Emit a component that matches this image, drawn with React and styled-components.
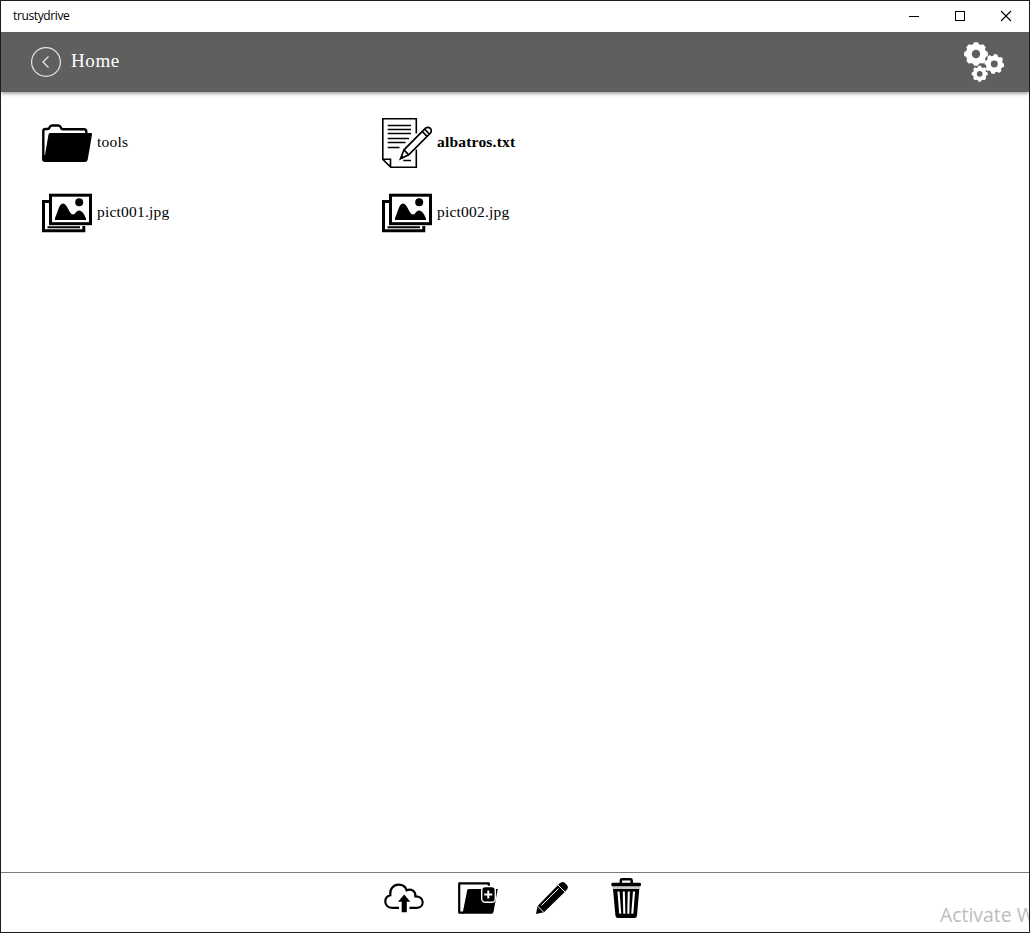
import React from "react";
import styled, { createGlobalStyle } from "styled-components";

const GlobalStyle = createGlobalStyle`
  * { box-sizing: border-box; }
  html, body { margin: 0; padding: 0; overflow: hidden; }
`;

const Window = styled.div`
  position: relative;
  display: flex;
  flex-direction: column;
  width: 1030px;
  height: 933px;
  border: 1px solid #1f1c20;
  background: #fff;
  color: #000;
  overflow: hidden;
  font-family: "Liberation Serif", "Times New Roman", serif;
`;

const TitleBar = styled.div`
  position: relative;
  z-index: 1;
  display: flex;
  justify-content: space-between;
  align-items: center;
  height: 31px;
  flex: none;
  padding-left: 12px;
  background: #fff;
  font: 12px/16px "Open Sans", "Noto Sans", sans-serif;
  letter-spacing: -0.38px;
`;

const AppName = styled.span`
  margin-bottom: 2px;
`;

const WindowButtons = styled.div`
  display: flex;
  margin-right: -10px;
`;

const WindowButton = styled.div`
  width: 46px;
  height: 31px;
  svg { display: block; }
`;

const Header = styled.header`
  display: flex;
  align-items: center;
  height: 60px;
  flex: none;
  padding: 0 25px 0 30px;
  background: #5f5f5f;
  color: #fff;
  box-shadow: 0 1px 4px rgba(0, 0, 0, 0.5);
`;

const HeaderTitle = styled.h1`
  flex: 1;
  margin: 0 0 2px 10px;
  font-size: 19px;
  line-height: 22px;
  letter-spacing: 0.6px;
  font-weight: normal;
`;

const Files = styled.main`
  flex: 1;
  display: grid;
  grid-template-columns: 340px 340px;
  grid-auto-rows: 50px;
  row-gap: 20px;
  padding: 26px 0 0 41px;
`;

const FileItem = styled.div`
  display: flex;
  align-items: center;
  gap: 5px;
  font-size: 15.5px;
  letter-spacing: 0.2px;
  font-weight: ${(p) => (p.$bold ? "bold" : "normal")};
  span { line-height: 18px; margin-bottom: 2px; }
`;

const Toolbar = styled.footer`
  display: flex;
  justify-content: center;
  gap: 34px;
  height: 60px;
  flex: none;
  padding: 5px 0 0;
  border-top: 1px solid #7c7c7c;
`;

const Icon = styled.svg`
  display: block;
  flex: none;
`;

const Watermark = styled.div`
  position: absolute;
  left: 939px;
  top: 900px;
  color: #bdbdbd;
  font: 19.4px/27px "Open Sans", "Noto Sans", sans-serif;
  white-space: nowrap;
`;

function gearPath(cx, cy, outer, inner, hole, teeth, turn = 0) {
  const step = (Math.PI * 2) / teeth;
  const points = [];
  const at = (angle, r) =>
    points.push(`${(cx + Math.cos(angle) * r).toFixed(2)} ${(cy + Math.sin(angle) * r).toFixed(2)}`);
  for (let i = 0; i < teeth; i++) {
    const a = i * step + turn;
    at(a - step * 0.34, inner);
    at(a - step * 0.2, outer);
    at(a + step * 0.2, outer);
    at(a + step * 0.34, inner);
  }
  return `M${points.join("L")}ZM${cx - hole} ${cy}a${hole} ${hole} 0 1 0 ${hole * 2} 0a${hole} ${hole} 0 1 0 ${-hole * 2} 0Z`;
}

const BackIcon = () => (
  <Icon width="30" height="30" viewBox="0 0 30 30" fill="none" stroke="#e6e6e6">
    <circle cx="15" cy="15" r="14.4" strokeWidth="1.2" />
    <path d="M17.500 9.500L12 15l5.500 5.500" strokeWidth="1.3" />
  </Icon>
);

const GearsIcon = () => (
  <Icon width="40" height="40" viewBox="0 0 40 40" fill="#fff" fillRule="evenodd">
    <path d={gearPath(12, 12, 12, 10.3, 4.2, 8, Math.PI / 2)} />
    <path d={gearPath(30.3, 22, 10, 8.4, 3.5, 8, 0.15)} />
    <path d={gearPath(15.7, 31.8, 8.1, 6.8, 2.9, 8, 0)} />
  </Icon>
);

const FolderIcon = () => (
  <Icon width="50" height="50" viewBox="0 0 50 50">
    <path d="M1.300 40V13Q1.300 11 3.500 11H5.500Q7 11 7.500 9.500Q8.400 7.500 10 7.500H16.500Q18 7.500 18.700 9.300Q19.300 11.200 21 11.200H42Q44.300 11.200 44.300 13.500V16" fill="none" stroke="#000" strokeWidth="2.400" />
    <path d="M8 15H49Q50.200 15 50 16.400L45.700 41.800Q45.300 44 43 44H3Q0 44 0 41V37H3L6.500 16.500Q6.800 15 8 15Z" />
  </Icon>
);

const DocumentIcon = () => (
  <Icon width="50" height="50" viewBox="0 0 50 50" fill="none" stroke="#000" strokeWidth="1.600">
    <path d="M34.300 15.500V.8H.8V41.300L8.800 49.200H34.300V31.500M.8 41.300H8.500V49" />
    <path d="M5.700 7.500H29M5.700 11.500H29M5.700 15.500H29M5.700 20.500H27M5.700 24.500H23.500M5.700 29.500H17.500M21.300 42.500H29" />
    <path d="M18.500 40.700L22 31.800L43.800 10Q46 8.300 48.400 10.500Q50.200 12.700 48.500 15L26.700 36.800Z" fill="#fff" strokeWidth="1.700" />
    <path d="M22 31.800L26.700 36.800M40.300 13.500L45 18.300M42.600 11.200L47.300 16" strokeWidth="1.700" />
    <path d="M18 41.200L19.800 37L22 39.500Z" fill="#000" stroke="none" />
  </Icon>
);

const PicturesIcon = () => (
  <Icon width="50" height="50" viewBox="0 0 50 50">
    <path d="M7 13.500H1.500V42.700H41.800V38" fill="none" stroke="#000" strokeWidth="3" />
    <path d="M5.500 38.300H38V40.300H5.500Z" />
    <rect x="8.500" y="7.200" width="40" height="28.500" fill="#fff" stroke="#000" strokeWidth="3" />
    <path d="M13 32V30C15.500 25 17 15.500 21 15.500C25.500 15.500 27 26.500 31 26.500C33.500 26.500 34 22.500 37 22.500C40.500 22.500 43 28 44 30.500V32Z" />
    <circle cx="37.200" cy="14.300" r="4" />
  </Icon>
);

const UploadIcon = () => (
  <Icon width="40" height="40" viewBox="0 0 40 40">
    <path d="M15 29.800H8C4 29.800 1.300 27 1.300 23.500C1.300 20.200 3.500 18 6.300 17.300C5.500 11 9.500 6.700 14.500 6.700C18.500 6.700 21.500 8.800 22.700 12.300C27.500 10.200 31.800 13.500 31.400 18.300C35.500 18.300 38.700 20.500 38.700 24.200C38.700 27.500 36 29.800 32.500 29.800H25.500" fill="none" stroke="#000" strokeWidth="2.200" />
    <path d="M20.200 16.500L26.300 23.800H22.800V34.200H17.700V23.800H14Z" />
  </Icon>
);

const NewFolderIcon = () => (
  <Icon width="40" height="40" viewBox="0 0 40 40">
    <path d="M30.800 9V5.400H1.200V34.600H6" fill="none" stroke="#000" strokeWidth="2.200" strokeLinejoin="round" />
    <path d="M10.500 11H39.700L35.500 34Q35.200 35.700 33.500 35.700H4.500L9.200 12.200Q9.500 11 10.500 11Z" />
    <rect x="23.700" y="8.500" width="13.600" height="15.700" rx="3.500" fill="#000" stroke="#fff" strokeWidth="1.400" />
    <path d="M30.300 12.500V20.500M26.300 16.500H34.300" stroke="#fff" strokeWidth="2" />
  </Icon>
);

const PencilIcon = () => (
  <Icon width="40" height="40" viewBox="0 0 40 40">
    <path d="M4 36L5.500 28L27.500 5.500L29.500 4.200Q31 3.500 32.500 4.500L35.300 7.400Q36.500 9 35.400 10.800L34 12.800L12 34.300Z" />
    <path d="M5.500 28L12 34.500M26 7L33 14M9.500 27.500L26.500 10.500" stroke="#fff" strokeWidth="1" />
  </Icon>
);

const TrashIcon = () => (
  <Icon width="40" height="40" viewBox="0 0 40 40">
    <path d="M14.800 6V2.500Q14.800 1.300 16 1.300H24.500Q25.700 1.300 25.700 2.500V6" fill="none" stroke="#000" strokeWidth="2.500" />
    <rect x="5.300" y="4.700" width="29.700" height="3.800" rx="1.400" />
    <path d="M6.500 8.500H34V11H6.500Z" fill="#c8c8c8" />
    <path d="M7 11H33.300L31 37.500Q30.800 40 28.500 40H12Q9.600 40 9.400 37.500Z" />
    <path d="M12.500 13.500L14.200 35.700M17.800 13.500L18.300 35.700M22.800 13.500L22.300 35.700M28 13.500L26.300 35.700" stroke="#fff" strokeWidth="2.100" />
  </Icon>
);

export default function App() {
  return (
    <Window>
      <GlobalStyle />
      <TitleBar>
        <AppName>trustydrive</AppName>
        <WindowButtons>
          <WindowButton>
            <svg width="46" height="31"><path d="M8 15.500H18" stroke="#000" /></svg>
          </WindowButton>
          <WindowButton>
            <svg width="46" height="31"><rect x="8.500" y="10.500" width="9" height="9" fill="none" stroke="#000" /></svg>
          </WindowButton>
          <WindowButton>
            <svg width="46" height="31"><path d="M8 10L18 20M18 10L8 20" stroke="#000" strokeWidth="1.100" /></svg>
          </WindowButton>
        </WindowButtons>
      </TitleBar>
      <Header>
        <BackIcon />
        <HeaderTitle>Home</HeaderTitle>
        <GearsIcon />
      </Header>
      <Files>
        <FileItem><FolderIcon /><span>tools</span></FileItem>
        <FileItem $bold><DocumentIcon /><span>albatros.txt</span></FileItem>
        <FileItem><PicturesIcon /><span>pict001.jpg</span></FileItem>
        <FileItem><PicturesIcon /><span>pict002.jpg</span></FileItem>
      </Files>
      <Toolbar>
        <UploadIcon />
        <NewFolderIcon />
        <PencilIcon />
        <TrashIcon />
      </Toolbar>
      <Watermark>Activate W</Watermark>
    </Window>
  );
}
